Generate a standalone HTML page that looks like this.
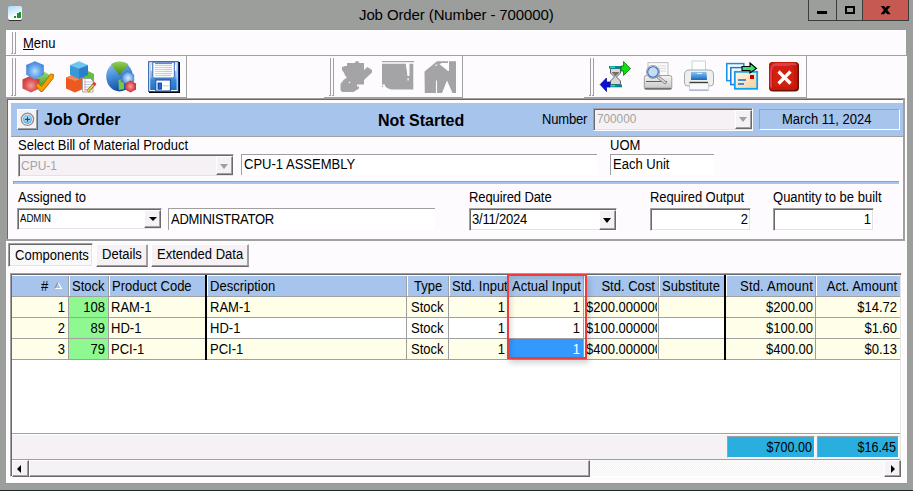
<!DOCTYPE html>
<html><head><meta charset="utf-8">
<style>
*{box-sizing:border-box;margin:0;padding:0}
html,body{width:913px;height:491px;overflow:hidden;background:#9c9e9b;font-family:"Liberation Sans",sans-serif;color:#000}
.a{position:absolute}
.t{position:absolute;white-space:nowrap;font-size:14px;line-height:15px;transform:scaleX(0.93);transform-origin:0 0}
.t.r{transform-origin:100% 0}
.t.n{transform:none}
.r{text-align:right}
.gl{position:absolute;width:1px;background:#a0a0a0}

.cb{position:absolute;border:1px solid;border-color:#a0a0a0 #fff #fff #a0a0a0;box-shadow:inset 1px 1px 0 #696969,inset -1px -1px 0 #e3e3e3;background:#fff}
.cbd{background:#f5f1f5}
.btn{position:absolute;background:#f5f1f5;border:1px solid;border-color:#fff #696969 #696969 #fff;box-shadow:inset -1px -1px 0 #a0a0a0}
.tri{position:absolute;width:0;height:0;border-left:4.5px solid transparent;border-right:4.5px solid transparent;border-top:5px solid #000}
.tb{position:absolute;border-top:1px solid #a0a0a0;border-left:1px solid #a0a0a0;background:#fff}

.hd{position:absolute;top:276px;height:20px;background:#a6c4ec}
.hs{position:absolute;top:276px;width:1px;height:20px;background:#a0a0a0;box-shadow:1px 0 0 #fff}
.vl{position:absolute;width:1px;background:#a0a0a0}
.hl{position:absolute;height:1px;background:#a0a0a0}
.ye{background:#fefee9}
.dith{background:repeating-conic-gradient(#f3f3f3 0 25%,#fefefe 0 50%) 0 0/2px 2px}
</style></head><body>
<!-- title bar -->
<div class="a" style="left:8px;top:6px;width:14px;height:14px;border-radius:2px;background:linear-gradient(160deg,#a8d8f8,#ffffff 70%);box-shadow:0 1px 0 #333"></div>
<div class="a" style="left:14px;top:16px;width:2px;height:2px;background:#119922"></div>
<div class="a" style="left:17px;top:13px;width:2px;height:5px;background:#119922"></div>
<div class="a" style="left:19px;top:12px;width:2px;height:6px;background:#119922"></div>
<div class="t n" style="left:359px;top:6px;font-size:15px;line-height:17px;color:#000;letter-spacing:-0.11px">Job Order (Number - 700000)</div>
<div class="a" style="left:808px;top:0;width:101px;height:21px;border:1px solid #3c3c3c;border-top:none;background:#9c9e9b"></div>
<div class="a" style="left:836px;top:0;width:1px;height:21px;background:#3c3c3c"></div>
<div class="a" style="left:862px;top:0;width:47px;height:21px;background:#c75a50;border:1px solid #3c3c3c;border-top:none"></div>
<div class="a" style="left:817px;top:11px;width:10px;height:3px;background:#000"></div>
<div class="a" style="left:845px;top:6px;width:10px;height:8px;border:2px solid #000"></div>
<svg class="a" style="left:880px;top:5px" width="12" height="11"><defs><clipPath id="cx"><rect x="0" y="1" width="12" height="8.2"/></clipPath></defs><g clip-path="url(#cx)"><path d="M1.6 0 L9.6 10.2 M9.6 0 L1.6 10.2" stroke="#000" stroke-width="2.7"/></g></svg>

<!-- inner container -->
<div class="a" style="left:6px;top:56px;width:901px;height:427px;background:#fefbfe"></div>
<div class="a" style="left:6px;top:30px;width:900px;height:26px;background:#fefbfe"></div>
<div class="a" style="left:6px;top:29px;width:900px;height:1px;background:#8e9aa8"></div>
<div class="a" style="left:6px;top:30px;width:900px;height:1px;background:#fff"></div>
<div class="a" style="left:6px;top:483px;width:901px;height:1px;background:#8e98a6"></div>
<div class="a" style="left:0;top:490px;width:913px;height:1px;background:#1f2626"></div>
<!-- menu bar -->
<div class="a" style="left:6px;top:55px;width:901px;height:1px;background:#a0a0a0"></div>
<div class="gl" style="left:12px;top:32px;height:22px"></div>
<div class="gl" style="left:15px;top:32px;height:22px"></div>
<div class="t" style="left:23px;top:36px"><u>M</u>enu</div>

<!-- toolbar -->
<div class="a" style="left:11px;top:53px;width:1px;height:1px;background:#a0a0a0"></div>
<div class="a" style="left:14px;top:53px;width:1px;height:1px;background:#a0a0a0"></div>
<div class="a" style="left:11px;top:95px;width:1px;height:1px;background:#a0a0a0"></div>
<div class="a" style="left:14px;top:95px;width:1px;height:1px;background:#a0a0a0"></div>
<div class="a" style="left:329px;top:95px;width:1px;height:1px;background:#a0a0a0"></div>
<div class="a" style="left:332px;top:95px;width:1px;height:1px;background:#a0a0a0"></div>
<div class="a" style="left:589px;top:95px;width:1px;height:1px;background:#a0a0a0"></div>
<div class="a" style="left:592px;top:95px;width:1px;height:1px;background:#a0a0a0"></div>
<div class="gl" style="left:186px;top:56px;height:42px"></div>
<div class="a" style="left:6px;top:97px;width:181px;height:1px;background:#a0a0a0"></div>
<div class="gl" style="left:12px;top:58px;height:38px"></div>
<div class="gl" style="left:15px;top:58px;height:38px"></div>

<div class="gl" style="left:462px;top:56px;height:42px"></div>
<div class="a" style="left:324px;top:97px;width:139px;height:1px;background:#a0a0a0"></div>
<div class="gl" style="left:330px;top:58px;height:38px"></div>
<div class="gl" style="left:333px;top:58px;height:38px"></div>

<div class="gl" style="left:806px;top:56px;height:42px"></div>
<div class="a" style="left:584px;top:97px;width:223px;height:1px;background:#a0a0a0"></div>
<div class="gl" style="left:590px;top:58px;height:38px"></div>
<div class="gl" style="left:593px;top:58px;height:38px"></div>


<!-- ICONS -->
<svg class="a" style="left:20px;top:59px" width="36" height="36" viewBox="0 0 36 36">
 <defs>
  <radialGradient id="gb1" cx="0.5" cy="0.55" r="0.6"><stop offset="0" stop-color="#b8dcfa"/><stop offset="0.5" stop-color="#6aa8ec"/><stop offset="1" stop-color="#3a78d8"/></radialGradient>
  <radialGradient id="gr1" cx="0.5" cy="0.6" r="0.6"><stop offset="0" stop-color="#f0a0a0"/><stop offset="0.5" stop-color="#e05a5a"/><stop offset="1" stop-color="#c83434"/></radialGradient>
  <linearGradient id="gg1" x1="0" y1="0" x2="0" y2="1"><stop offset="0" stop-color="#90e070"/><stop offset="1" stop-color="#4aa030"/></linearGradient>
 </defs>
 <path d="M18 13 L24 12.5 L29 15.5 L29 23 L22 27 L18 25 Z" fill="url(#gg1)"/>
 <path d="M11 16.5 L19.5 20.5 L19.5 29.5 L11 33.5 L2.5 29.5 L2.5 20.5 Z" fill="url(#gr1)"/>
 <path d="M15 2.2 L23.8 5.9 L23.8 15.8 L15 20.5 L6.2 15.8 L6.2 5.9 Z" fill="url(#gb1)"/>
 <path d="M15.5 26 L18.5 24.5 L21.5 27.5 L30.5 15 L33.5 15.5 L33 19.5 L22.5 32.5 L20.5 32.5 Z" fill="#f5a000" stroke="#b86a00" stroke-width="1" stroke-linejoin="round"/>
</svg>

<svg class="a" style="left:64px;top:59px" width="36" height="36" viewBox="0 0 36 36">
 <path d="M17 12 L24 12 L30 15 L30 24 L22 28 L17 26 Z" fill="#5cc43a"/>
 <path d="M2 18.5 L10 15.5 L19 19 L19 30 L11 33.5 L2 29.5 Z" fill="#ec5a22"/>
 <path d="M2 18.5 L10 15.5 L19 19 L11 22 Z" fill="#f88850"/>
 <path d="M6 5.9 L15 2.2 L24 5.9 L15 9.5 Z" fill="#6cc4f0"/>
 <path d="M6 5.9 L15 9.5 L15 20 L6 16 Z" fill="#3a98d8"/>
 <path d="M15 9.5 L24 5.9 L24 16 L15 20 Z" fill="#2a80c8"/>
 <path d="M18.5 19.5 L26.5 19.5 L29 22 L29 33 L18.5 33 Z" fill="#fff" stroke="#8a9aa0" stroke-width="0.8"/>
 <path d="M20 23 L28 23 M20 25.5 L28 25.5 M20 28 L28 28 M20 30.5 L28 30.5" stroke="#9ab0e0" stroke-width="0.7"/>
 <path d="M21 20 L21 33" stroke="#f08080" stroke-width="0.7"/>
 <path d="M23.5 32.5 L30.5 25" stroke="#806010" stroke-width="3"/>
 <path d="M23.5 32.5 L30.5 25" stroke="#f0d040" stroke-width="1.8"/>
 <path d="M29.5 26 L31.5 24" stroke="#e03030" stroke-width="2.6"/>
</svg>

<svg class="a" style="left:104px;top:59px" width="36" height="36" viewBox="0 0 36 36">
 <defs>
  <linearGradient id="gp3" x1="0" y1="0" x2="0.3" y2="1"><stop offset="0" stop-color="#9ad0f6"/><stop offset="0.5" stop-color="#4a90d8"/><stop offset="1" stop-color="#1452a4"/></linearGradient>
  <linearGradient id="gw3" x1="0" y1="0" x2="0" y2="1"><stop offset="0" stop-color="#98d050"/><stop offset="1" stop-color="#3a8a10"/></linearGradient>
  <radialGradient id="gh3" cx="0.55" cy="0.5" r="0.55"><stop offset="0" stop-color="#d8ecff"/><stop offset="0.6" stop-color="#7ab0ec"/><stop offset="1" stop-color="#3a70c8"/></radialGradient>
  <radialGradient id="gr3" cx="0.5" cy="0.5" r="0.55"><stop offset="0" stop-color="#f4a0a0"/><stop offset="0.6" stop-color="#e05050"/><stop offset="1" stop-color="#c02828"/></radialGradient>
 </defs>
 <ellipse cx="15.5" cy="17.5" rx="13.3" ry="15" fill="url(#gp3)"/>
 <path d="M15.5 16.5 L7 5 Q15.5 0.5 24.5 5 Z" fill="url(#gw3)"/>
 <path d="M14.5 21 L20 19 L20 30 L15 31 Z" fill="#78c848"/>
 <path d="M23.5 12.3 L29.8 15.8 L29.8 22.5 L23.5 25.8 L17.2 22.5 L17.2 15.8 Z" fill="url(#gh3)" stroke="#4a78b8" stroke-width="0.6"/>
 <path d="M26.5 21.5 L32 24.5 L32 30.5 L26.5 33.5 L21 30.5 L21 24.5 Z" fill="url(#gr3)"/>
</svg>

<svg class="a" style="left:146px;top:59px" width="36" height="36" viewBox="0 0 36 36">
 <defs><linearGradient id="gfl" x1="0" y1="0" x2="0" y2="1"><stop offset="0" stop-color="#b4d8f8"/><stop offset="0.5" stop-color="#7ab4ec"/><stop offset="0.62" stop-color="#3a8ad8"/><stop offset="1" stop-color="#2270c4"/></linearGradient></defs>
 <rect x="3" y="3" width="31" height="31" fill="#000"/>
 <rect x="2.2" y="2.2" width="30.5" height="30.8" fill="#1a4c9e"/>
 <rect x="3.2" y="3.2" width="28.5" height="28.8" fill="#f0f8ff"/>
 <rect x="4.2" y="4.2" width="26.5" height="26.8" fill="url(#gfl)"/>
 <rect x="28.5" y="5.5" width="1.8" height="6.5" fill="#fff"/>
 <rect x="4.8" y="5.5" width="1.4" height="6.5" fill="#e8f4ff"/>
 <path d="M6.8 3.2 L28.3 3.2 L28.3 17.5 Q28.3 19 26.8 19 L8.3 19 Q6.8 19 6.8 17.5 Z" fill="#fff" stroke="#2a5ab0" stroke-width="0.9"/>
 <path d="M9 4.6 L26 4.6" stroke="#3a88d0" stroke-width="1"/>
 <path d="M9 6.6 L21 6.6 M9 8.6 L20 8.6 M9 10.6 L19 10.6 M9 12.6 L18 12.6 M9 14.6 L17 14.6 M9 16.6 L15 16.6" stroke="#a8d0a0" stroke-width="0.8"/>
 <path d="M21 6.6 L26 6.6 M20 8.6 L26 8.6 M19 10.6 L26 10.6 M18 12.6 L26 12.6 M17 14.6 L26 14.6 M15 16.6 L25 16.6" stroke="#b8b0c0" stroke-width="0.8"/>
 <rect x="9.8" y="21" width="14.6" height="11" fill="#fff" stroke="#1a50a8" stroke-width="1.1"/>
 <rect x="12" y="24" width="3.4" height="6.2" fill="#1a6ad0" stroke="#0a3488" stroke-width="0.8"/>
 <path d="M16.5 26.8 L23 26.8" stroke="#b8d0b0" stroke-width="0.9"/>
</svg>

<svg class="a" style="left:338px;top:59px" width="36" height="36" viewBox="0 0 36 36">
 <path fill="#a4a3a5" d="M4 8 L7 7 L9 7 L9 4 L17 4 L17.5 2.3 L20.5 2.3 L21 4 L26 4 L26 11 L29.5 8 L34 11 L34 13.5 L26 21 L26 25.5 L19 25.5 L19 27.5 L21 27.5 L21 29.5 L15.5 33 L4 33 L2.5 31 L2.5 25 L5.5 21 L9 18.5 L7.5 17 L5.5 13 L4 11 Z"/>
 <circle cx="11.5" cy="23.5" r="0.8" fill="#fff"/>
</svg>

<svg class="a" style="left:380px;top:59px" width="36" height="36" viewBox="0 0 36 36">
 <g fill="#a4a3a5">
 <rect x="2" y="2" width="32" height="1.2"/>
 <path d="M2 4.8 L25.8 4.8 L27.5 17 L29.5 17 L29.5 4.8 L33.3 4.8 L33.3 30.6 L11 30.6 L7 29 L5 27 L5 25.5 L2 25.5 Z"/>
 <rect x="2" y="26.5" width="1" height="1.5"/>
 </g>
 <path d="M26.6 4.8 L28.3 16.5" stroke="#fefbfe" stroke-width="1"/>
 <rect x="27.5" y="19" width="1.2" height="2.5" fill="#fefbfe"/>
</svg>

<svg class="a" style="left:422px;top:59px" width="36" height="36" viewBox="0 0 36 36">
 <g fill="#a4a3a5">
 <rect x="27" y="2.2" width="7" height="31.8"/>
 <path d="M2.5 12.5 L15 2.3 L26 2.3 L26 4 L19.5 4 L17.5 5.3 L26 12 L27 12 L27 34 L2.8 34 Z"/>
 </g>
 <path d="M14.5 21.5 L14.5 34" stroke="#fefbfe" stroke-width="1.1"/>
 <path d="M25 21.5 L20 34 L30.5 34 Z" fill="#fefbfe"/>
 <path d="M12.8 6.5 L15.3 5 L14.8 7 Z" fill="#fefbfe"/>
</svg>

<svg class="a" style="left:598px;top:59px" width="36" height="36" viewBox="0 0 36 36">
 <path d="M12.5 9.5 L22.5 9.5 L22.5 14 L18.5 18 L22.5 22 L22.5 25.5 L12.5 25.5 L12.5 22 L16.5 18 L12.5 14 Z" fill="#d8d8d8" stroke="#404040" stroke-width="0.8"/>
 <path d="M13.5 13 L21.5 13 L17.5 17.5 Z" fill="#555" opacity="0.8"/>
 <rect x="11" y="7" width="13" height="2.6" fill="#008a8a"/>
 <rect x="12" y="7.6" width="5" height="1.2" fill="#20e8e8"/>
 <rect x="11" y="25.5" width="13" height="2.8" fill="#008a8a"/>
 <rect x="12" y="26.2" width="5" height="1.2" fill="#20e8e8"/>
 <path d="M23 7 L25.5 7 L25.5 2.5 L32.5 9.5 L25.5 16.5 L25.5 12 L23 12 Z" fill="#10e010" stroke="#006000" stroke-width="0.7"/>
 <path d="M12 23 L8.5 23 L8.5 19 L2.2 25.5 L8.5 32.5 L8.5 28 L12 28 Z" fill="#0a10e0" stroke="#000080" stroke-width="0.7"/>
</svg>

<svg class="a" style="left:640px;top:59px" width="36" height="36" viewBox="0 0 36 36">
 <defs>
  <linearGradient id="gpr" x1="0" y1="0" x2="0" y2="1"><stop offset="0" stop-color="#f4f4f4"/><stop offset="1" stop-color="#c4c4c4"/></linearGradient>
 </defs>
 <rect x="8" y="3.7" width="20" height="16" fill="#fbfbfb" stroke="#b0b0b0" stroke-width="0.8"/>
 <path d="M18 7 L26 7 M18 9.5 L26 9.5 M19 12 L26 12" stroke="#c8c8c8" stroke-width="0.7"/>
 <rect x="4.3" y="16.5" width="27.5" height="14" rx="2" fill="url(#gpr)" stroke="#8a8a8a" stroke-width="0.8"/>
 <path d="M6 22.5 L27 22.5" stroke="#606060" stroke-width="1"/>
 <path d="M5 29.5 L31 29.5" stroke="#707070" stroke-width="1.4"/>
 <path d="M18.5 18.5 L25 23.5" stroke="#808080" stroke-width="3.2" stroke-linecap="round"/>
 <path d="M18.5 18.5 L25 23.5" stroke="#d8d8d8" stroke-width="1.6" stroke-linecap="round"/>
 <circle cx="13" cy="13" r="6.6" fill="#d8d8d8" stroke="#9a9a9a" stroke-width="0.8"/>
 <circle cx="13" cy="13" r="5.3" fill="#c8ddf2" stroke="#2f6fc8" stroke-width="1.1"/>
</svg>

<svg class="a" style="left:680px;top:59px" width="36" height="36" viewBox="0 0 36 36">
 <defs>
  <linearGradient id="gpb" x1="0" y1="0" x2="0" y2="1"><stop offset="0" stop-color="#8cc4f0"/><stop offset="1" stop-color="#1568c0"/></linearGradient>
 </defs>
 <rect x="12" y="2" width="13.5" height="13" fill="#fdfdfd" stroke="#b8c8d8" stroke-width="0.8"/>
 <path d="M4.5 16 Q4.5 11 9 11 L29 11 Q33.5 11 33.5 16 L33.5 24 Q33.5 27 30 27 L8 27 Q4.5 27 4.5 24 Z" fill="#eef0ee" stroke="#8a98a8" stroke-width="0.8"/>
 <path d="M11 13 L26.5 13 L27 21 L11 21 Z" fill="url(#gpb)"/>
 <rect x="17" y="14" width="5" height="1" fill="#e0f0ff"/>
 <path d="M9.5 23.5 L28 23.5" stroke="#303030" stroke-width="1.4"/>
 <path d="M9.5 24.3 L28.5 24.3 L28.5 31 L9.5 31 Z" fill="#fafafa" stroke="#b0b8c8" stroke-width="0.6"/>
 <path d="M9.5 31.2 L28.5 31.2" stroke="#9098c0" stroke-width="0.9"/>
</svg>

<svg class="a" style="left:724px;top:59px" width="36" height="36" viewBox="0 0 36 36">
 <defs>
  <linearGradient id="gen" x1="0" y1="0" x2="1" y2="1"><stop offset="0" stop-color="#fff8e8"/><stop offset="1" stop-color="#f4d098"/></linearGradient>
 </defs>
 <rect x="2.8" y="4.6" width="17" height="17" fill="#fff" stroke="#1090e8" stroke-width="1.5"/>
 <rect x="6.8" y="8.6" width="15" height="17" fill="#fffaf0" stroke="#1878e0" stroke-width="1.5"/>
 <rect x="10.8" y="12.8" width="22.4" height="17" fill="url(#gen)" stroke="#10a0f0" stroke-width="1.8"/>
 <rect x="26" y="16" width="4" height="4" fill="#c40000"/>
 <path d="M14 21 L22 21 M14 25 L20 25" stroke="#1868d8" stroke-width="1.6"/>
 <path d="M18 7.5 L26 7.5 L26 4 L32.5 9.5 L26 14 L26 11.5 L18 11.5 Z" fill="#38e070" stroke="#000" stroke-width="1.1"/>
</svg>

<svg class="a" style="left:766px;top:59px" width="36" height="36" viewBox="0 0 36 36">
 <rect x="3" y="3" width="30" height="29.5" rx="4" fill="#6a1008"/>
 <rect x="3" y="3" width="28.5" height="28" rx="4" fill="#c81808"/>
 <path d="M4 14 Q4 4 10 4 L28 4 Q30 4 31 6 L8 8 Q6 9 6 14 L6 29 L4 28 Z" fill="#e8506a" opacity="0.7"/>
 <rect x="7" y="7" width="21" height="20.5" rx="2" fill="#d02010"/>
 <path d="M12.5 12.5 L24.5 24.5 M24.5 12.5 L12.5 24.5" stroke="#fff" stroke-width="3.2"/>
</svg>

<!-- form panel -->
<div class="a" style="left:6px;top:98px;width:899px;height:143px;border-top:1px solid #a0a0a0;border-left:1px solid #a0a0a0;border-right:2px solid #a0a0a0;border-bottom:2px solid #a0a0a0;box-shadow:inset 1px 1px 0 #696969"></div>
<div class="a" style="left:11px;top:103px;width:892px;height:33px;background:#a6c4ec"></div>
<div class="a" style="left:11px;top:136px;width:892px;height:1px;background:#a0a0a0"></div>


<!-- header row -->
<div class="btn" style="left:17px;top:109px;width:21px;height:21px;border-color:#fff #696969 #696969 #fff"></div>
<svg class="a" style="left:20px;top:112px" width="15" height="15" viewBox="0 0 15 15">
 <defs><radialGradient id="gplus" cx="0.5" cy="0.45" r="0.55"><stop offset="0" stop-color="#e4f6ff"/><stop offset="0.6" stop-color="#8fd0f4"/><stop offset="1" stop-color="#4aa8e0"/></radialGradient></defs>
 <circle cx="7.5" cy="7.3" r="6.1" fill="#f4f4f4" stroke="#8e8e8e" stroke-width="1.3"/>
 <circle cx="7.5" cy="7.3" r="4.6" fill="url(#gplus)"/>
 <path d="M5 7.3 L10 7.3 M7.5 4.8 L7.5 9.8" stroke="#1f4a78" stroke-width="1.2"/>
</svg>
<div class="t n" style="left:44px;top:111px;font-size:16px;line-height:18px;font-weight:bold">Job Order</div>
<div class="t n" style="left:378px;top:112px;font-size:16px;line-height:18px;font-weight:bold">Not Started</div>
<div class="t" style="left:542px;top:112px;letter-spacing:-0.2px">Number</div>
<div class="cb cbd" style="left:593px;top:108px;width:160px;height:23px"></div>
<div class="t" style="left:597px;top:111px;font-size:13.5px;transform:scaleX(0.87);color:#a3a3a3">700000</div>
<div class="btn" style="left:735px;top:110px;width:17px;height:19px"></div>
<div class="tri" style="left:739px;top:117px;border-top-color:#a0a0a0"></div>
<div class="a" style="left:759px;top:109px;width:141px;height:21px;border:1px solid;border-color:#a0a0a0 #fff #fff #a0a0a0;background:#a6c4ec"></div>
<div class="t" style="left:782px;top:112px">March 11, 2024</div>

<!-- row 1 -->
<div class="t" style="left:18px;top:138px">Select Bill of Material Product</div>
<div class="cb cbd" style="left:18px;top:154px;width:216px;height:23px"></div>
<div class="t" style="left:21px;top:158px;font-size:13.5px;transform:scaleX(0.89);color:#a3a3a3">CPU-1</div>
<div class="btn" style="left:216px;top:156px;width:17px;height:19px"></div>
<div class="tri" style="left:220px;top:164px;border-top-color:#a0a0a0"></div>
<div class="tb" style="left:241px;top:154px;width:356px;height:21px"></div>
<div class="t" style="left:244px;top:157px">CPU-1 ASSEMBLY</div>
<div class="t" style="left:610px;top:138px">UOM</div>
<div class="tb" style="left:610px;top:154px;width:104px;height:21px"></div>
<div class="t" style="left:613px;top:157px">Each Unit</div>
<!-- separator -->
<div class="a" style="left:13px;top:181px;width:886px;height:3px;background:#a6c4ec;border-top:1px solid #a0a0a0;border-left:1px solid #a0a0a0"></div>

<!-- row 2 -->
<div class="t" style="left:18px;top:190px">Assigned to</div>
<div class="cb" style="left:17px;top:208px;width:145px;height:22px"></div>
<div class="t" style="left:20px;top:212px;font-size:11px;line-height:12px;transform:scaleX(0.875)">ADMIN</div>
<div class="btn" style="left:144px;top:210px;width:17px;height:18px"></div>
<div class="tri" style="left:149px;top:217px;border-left-width:4px;border-right-width:4px;border-top-width:4.5px"></div>
<div class="tb" style="left:168px;top:208px;width:267px;height:22px"></div>
<div class="t" style="left:171px;top:212px;letter-spacing:-0.3px">ADMINISTRATOR</div>
<div class="t" style="left:469px;top:190px;letter-spacing:-0.12px">Required Date</div>
<div class="cb" style="left:469px;top:208px;width:148px;height:23px"></div>
<div class="t" style="left:472px;top:212px;letter-spacing:-0.22px">3/11/2024</div>
<div class="btn" style="left:599px;top:210px;width:17px;height:20px"></div>
<div class="tri" style="left:603px;top:218px"></div>
<div class="t" style="left:650px;top:190px;letter-spacing:-0.1px">Required Output</div>
<div class="cb" style="left:650px;top:208px;width:101px;height:23px"></div>
<div class="t r" style="left:650px;width:98px;top:212px">2</div>
<div class="t" style="left:773px;top:190px">Quantity to be built</div>
<div class="cb" style="left:773px;top:208px;width:101px;height:23px"></div>
<div class="t r" style="left:773px;width:98px;top:212px">1</div>
<div class="a dith" style="left:8px;top:243px;width:85px;height:24px;border:1px solid;border-color:#a0a0a0 #fff #fff #a0a0a0;box-shadow:inset 1px 1px 0 #696969,inset -1px -1px 0 #e3e3e3"></div>
<div class="t" style="left:14.5px;top:248px">Components</div>
<div class="btn" style="left:96px;top:244px;width:52px;height:23px;border-color:#fff #a0a0a0 #696969 #fff;box-shadow:inset -1px -1px 0 #a0a0a0"></div>
<div class="t" style="left:102px;top:247px">Details</div>
<div class="btn" style="left:151px;top:244px;width:98px;height:23px;border-color:#fff #a0a0a0 #696969 #fff;box-shadow:inset -1px -1px 0 #a0a0a0"></div>
<div class="t" style="left:157px;top:247px">Extended Data</div>
<div class="a" style="left:10px;top:273px;width:892px;height:204px;border:1px solid;border-color:#a0a0a0 #fff #fff #a0a0a0;box-shadow:inset 1px 1px 0 #696969,inset -1px -1px 0 #e3e3e3;background:#fff"></div>
<div class="a" style="left:12px;top:275px;width:888px;height:1px;background:#fff"></div>
<div class="hd" style="left:12px;width:56px"></div>
<div class="hd" style="left:70px;width:38px"></div>
<div class="hd" style="left:110px;width:95px"></div>
<div class="hd" style="left:208px;width:198px"></div>
<div class="hd" style="left:408px;width:40px"></div>
<div class="hd" style="left:450px;width:57px"></div>
<div class="hd" style="left:509px;width:74px"></div>
<div class="hd" style="left:585px;width:73px"></div>
<div class="hd" style="left:660px;width:64px"></div>
<div class="hd" style="left:727px;width:88px"></div>
<div class="hd" style="left:817px;width:83px"></div>
<div class="hs" style="left:68px"></div>
<div class="hs" style="left:108px"></div>
<div class="hs" style="left:406px"></div>
<div class="hs" style="left:448px"></div>
<div class="hs" style="left:507px"></div>
<div class="hs" style="left:583px"></div>
<div class="hs" style="left:658px"></div>
<div class="hs" style="left:815px"></div>
<div class="hl" style="left:12px;top:296px;width:888px"></div>
<div class="a" style="left:12px;top:297px;width:56px;height:20px;background:#fefee9"></div>
<div class="a" style="left:69px;top:297px;width:39px;height:20px;background:#90f890"></div>
<div class="a" style="left:109px;top:297px;width:96px;height:20px;background:#fefee9"></div>
<div class="a" style="left:207px;top:297px;width:199px;height:20px;background:#fefee9"></div>
<div class="a" style="left:407px;top:297px;width:41px;height:20px;background:#fefee9"></div>
<div class="a" style="left:449px;top:297px;width:58px;height:20px;background:#fefee9"></div>
<div class="a" style="left:508px;top:297px;width:75px;height:20px;background:#fefee9"></div>
<div class="a" style="left:584px;top:297px;width:74px;height:20px;background:#fefee9"></div>
<div class="a" style="left:659px;top:297px;width:65px;height:20px;background:#fefee9"></div>
<div class="a" style="left:726px;top:297px;width:89px;height:20px;background:#fefee9"></div>
<div class="a" style="left:816px;top:297px;width:84px;height:20px;background:#fefee9"></div>
<div class="hl" style="left:12px;top:317px;width:888px"></div>
<div class="a" style="left:12px;top:318px;width:56px;height:20px;background:#fefee9"></div>
<div class="a" style="left:69px;top:318px;width:39px;height:20px;background:#90f890"></div>
<div class="a" style="left:109px;top:318px;width:96px;height:20px;background:#fefee9"></div>
<div class="a" style="left:207px;top:318px;width:199px;height:20px;background:#ffffff"></div>
<div class="a" style="left:407px;top:318px;width:41px;height:20px;background:#ffffff"></div>
<div class="a" style="left:449px;top:318px;width:58px;height:20px;background:#ffffff"></div>
<div class="a" style="left:508px;top:318px;width:75px;height:20px;background:#ffffff"></div>
<div class="a" style="left:584px;top:318px;width:74px;height:20px;background:#ffffff"></div>
<div class="a" style="left:659px;top:318px;width:65px;height:20px;background:#ffffff"></div>
<div class="a" style="left:726px;top:318px;width:89px;height:20px;background:#fefee9"></div>
<div class="a" style="left:816px;top:318px;width:84px;height:20px;background:#fefee9"></div>
<div class="hl" style="left:12px;top:338px;width:888px"></div>
<div class="a" style="left:12px;top:339px;width:56px;height:20px;background:#fefee9"></div>
<div class="a" style="left:69px;top:339px;width:39px;height:20px;background:#90f890"></div>
<div class="a" style="left:109px;top:339px;width:96px;height:20px;background:#fefee9"></div>
<div class="a" style="left:207px;top:339px;width:199px;height:20px;background:#fefee9"></div>
<div class="a" style="left:407px;top:339px;width:41px;height:20px;background:#fefee9"></div>
<div class="a" style="left:449px;top:339px;width:58px;height:20px;background:#fefee9"></div>
<div class="a" style="left:508px;top:339px;width:75px;height:20px;background:#fefee9"></div>
<div class="a" style="left:584px;top:339px;width:74px;height:20px;background:#fefee9"></div>
<div class="a" style="left:659px;top:339px;width:65px;height:20px;background:#fefee9"></div>
<div class="a" style="left:726px;top:339px;width:89px;height:20px;background:#fefee9"></div>
<div class="a" style="left:816px;top:339px;width:84px;height:20px;background:#fefee9"></div>
<div class="hl" style="left:12px;top:359px;width:888px"></div>
<div class="vl" style="left:68px;top:297px;height:63px"></div>
<div class="vl" style="left:108px;top:297px;height:63px"></div>
<div class="vl" style="left:406px;top:297px;height:63px"></div>
<div class="vl" style="left:448px;top:297px;height:63px"></div>
<div class="vl" style="left:507px;top:297px;height:63px"></div>
<div class="vl" style="left:583px;top:297px;height:63px"></div>
<div class="vl" style="left:658px;top:297px;height:63px"></div>
<div class="vl" style="left:815px;top:297px;height:63px"></div>
<div class="a" style="left:205px;top:275px;width:2px;height:85px;background:#000"></div>
<div class="a" style="left:724px;top:275px;width:2px;height:85px;background:#000"></div>
<div class="t" style="left:41px;top:279px">#</div>
<svg class="a" style="left:54px;top:282px" width="9" height="8"><path d="M4 0.6 L7.5 6.5 L0.6 6.5" fill="none" stroke="#fff" stroke-width="1.1"/><path d="M4 0.6 L0.6 6.5" fill="none" stroke="#9a8c84" stroke-width="1.1"/></svg>
<div class="t" style="left:72px;top:279px">Stock</div>
<div class="t" style="left:112px;top:279px">Product Code</div>
<div class="t" style="left:210px;top:279px">Description</div>
<div class="t" style="left:414px;top:279px">Type</div>
<div class="a" style="left:450px;top:279px;width:57px;height:15px;overflow:hidden"><div class="t" style="left:2px;top:0">Std. Input</div></div>
<div class="t" style="left:512px;top:279px">Actual Input</div>
<div class="t r" style="left:585px;width:70px;top:279px">Std. Cost</div>
<div class="t" style="left:662px;top:279px">Substitute</div>
<div class="t r" style="left:727px;width:86px;top:279px;letter-spacing:0.2px">Std. Amount</div>
<div class="t r" style="left:817px;width:80px;top:279px">Act. Amount</div>
<div class="t r" style="left:12px;width:53px;top:300px">1</div>
<div class="t r" style="left:69px;width:36px;top:300px">108</div>
<div class="t" style="left:111px;top:300px">RAM-1</div>
<div class="t" style="left:210px;top:300px">RAM-1</div>
<div class="t" style="left:411px;top:300px">Stock</div>
<div class="t r" style="left:449px;width:56px;top:300px">1</div>
<div class="t r" style="left:508px;width:72px;top:300px">1</div>
<div class="a" style="left:584px;top:300px;width:73px;height:15px;overflow:hidden"><div class="t" style="left:2px;top:0">$200.000000</div></div>
<div class="t r" style="left:726px;width:87px;top:300px">$200.00</div>
<div class="t r" style="left:816px;width:81px;top:300px">$14.72</div>
<div class="t r" style="left:12px;width:53px;top:321px">2</div>
<div class="t r" style="left:69px;width:36px;top:321px">89</div>
<div class="t" style="left:111px;top:321px">HD-1</div>
<div class="t" style="left:210px;top:321px">HD-1</div>
<div class="t" style="left:411px;top:321px">Stock</div>
<div class="t r" style="left:449px;width:56px;top:321px">1</div>
<div class="t r" style="left:508px;width:72px;top:321px">1</div>
<div class="a" style="left:584px;top:321px;width:73px;height:15px;overflow:hidden"><div class="t" style="left:2px;top:0">$100.000000</div></div>
<div class="t r" style="left:726px;width:87px;top:321px">$100.00</div>
<div class="t r" style="left:816px;width:81px;top:321px">$1.60</div>
<div class="t r" style="left:12px;width:53px;top:342px">3</div>
<div class="t r" style="left:69px;width:36px;top:342px">79</div>
<div class="t" style="left:111px;top:342px">PCI-1</div>
<div class="t" style="left:210px;top:342px">PCI-1</div>
<div class="t" style="left:411px;top:342px">Stock</div>
<div class="t r" style="left:449px;width:56px;top:342px">1</div>
<div class="a" style="left:509px;top:339px;width:74px;height:19px;background:#3399ff;border:1px dotted #cc6a1a"></div>
<div class="t r" style="left:508px;width:72px;top:342px;color:#fff">1</div>
<div class="a" style="left:584px;top:342px;width:73px;height:15px;overflow:hidden"><div class="t" style="left:2px;top:0">$400.000000</div></div>
<div class="t r" style="left:726px;width:87px;top:342px">$400.00</div>
<div class="t r" style="left:816px;width:81px;top:342px">$0.13</div>
<div class="a" style="left:507px;top:274px;width:80px;height:85px;border:2px solid #ee3b3b;box-shadow:2px 4px 6px rgba(0,0,0,0.18), inset 3px 3px 4px rgba(0,0,0,0.10)"></div>
<div class="hl" style="left:12px;top:433px;width:888px"></div>
<div class="a" style="left:12px;top:434px;width:888px;height:25px;background:#f5f1f5;border-top:1px solid #fff"></div>
<div class="a" style="left:727px;top:436px;width:88px;height:22px;background:#29aee0;border:1px solid;border-color:#a0a0a0 #fff #fff #a0a0a0"></div>
<div class="a" style="left:817px;top:436px;width:82px;height:22px;background:#29aee0;border:1px solid;border-color:#a0a0a0 #fff #fff #a0a0a0"></div>
<div class="t r" style="left:727px;width:85px;top:440px;font-size:14px;transform:scaleX(0.9)">$700.00</div>
<div class="t r" style="left:817px;width:79px;top:440px;font-size:14px;transform:scaleX(0.9)">$16.45</div>
<div class="hl" style="left:12px;top:459px;width:888px"></div>
<div class="a dith" style="left:12px;top:460px;width:888px;height:16px"></div>
<div class="btn" style="left:12px;top:460px;width:17px;height:17px"></div>
<div class="a" style="left:17px;top:465px;width:0;height:0;border-top:4px solid transparent;border-bottom:4px solid transparent;border-right:4px solid #000"></div>
<div class="btn" style="left:29px;top:460px;width:561px;height:17px"></div>
<div class="btn" style="left:884px;top:460px;width:17px;height:17px"></div>
<div class="a" style="left:891px;top:465px;width:0;height:0;border-top:4px solid transparent;border-bottom:4px solid transparent;border-left:4px solid #000"></div>
</body></html>
